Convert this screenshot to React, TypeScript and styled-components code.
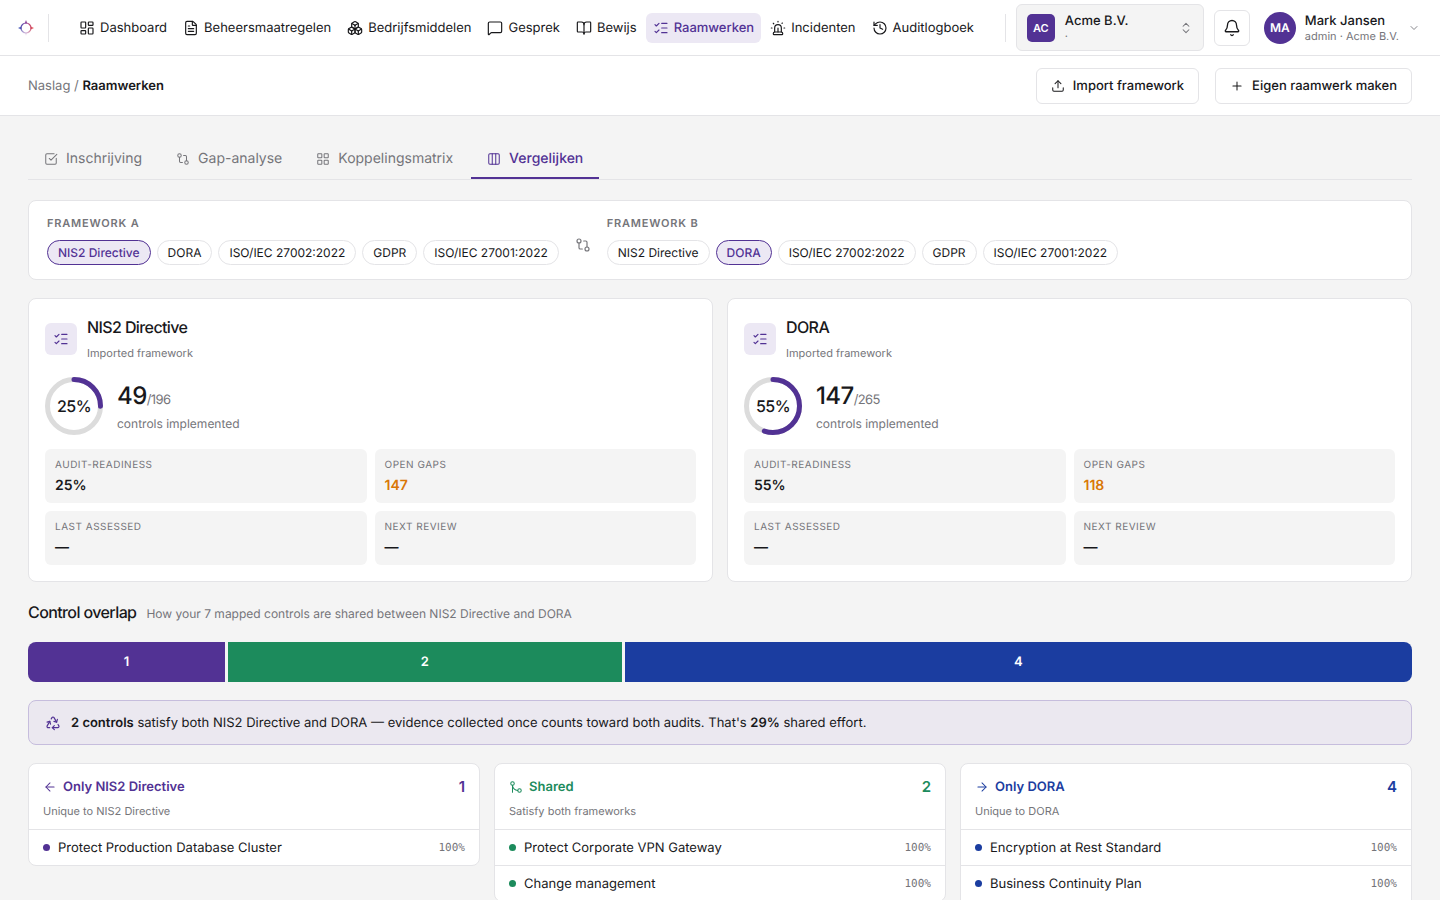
import React from "react";
import styled, { createGlobalStyle, css } from "styled-components";
import {
  ArrowLeft,
  ArrowRight,
  Bell,
  BookOpen,
  Boxes,
  ChevronDown,
  ChevronsUpDown,
  Columns3,
  FileText,
  GitCompare,
  GitMerge,
  History,
  LayoutDashboard,
  LayoutGrid,
  ListChecks,
  MessageSquare,
  Plus,
  Recycle,
  Siren,
  SquareCheckBig,
  Upload,
} from "lucide-react";
import type { LucideIcon } from "lucide-react";

const color = {
  ink: "#18181b",
  muted: "#75757a",
  line: "#e4e4e7",
  page: "#f4f4f4",
  card: "#ffffff",
  purple: "#523294",
  tint: "#ece8f4",
  green: "#1c8b5c",
  blue: "#1b3da0",
  amber: "#d97706",
};

const GlobalStyle = createGlobalStyle`
  *, *::before, *::after { box-sizing: border-box; }
  body {
    margin: 0;
    background: ${color.page};
    color: ${color.ink};
    font-family: Inter, "Liberation Sans", sans-serif;
    font-size: 13px;
    line-height: 20px;
    text-rendering: geometricPrecision;
  }
  button { font: inherit; color: inherit; cursor: pointer; margin: 0; text-rendering: inherit; }
  h2, p, ul { margin: 0; padding: 0; }
  ul { list-style: none; }
  svg { flex: none; }
  .lucide { stroke-width: 1.75; }
`;

const TopBar = styled.header`
  display: flex;
  align-items: center;
  height: 56px;
  padding: 0 20px 0 14px;
  background: ${color.card};
  border-bottom: 1px solid ${color.line};
`;

const Logo = styled.a`
  display: flex;
  padding: 2px;
  margin-right: 10px;
`;

const Rule = styled.span`
  flex: none;
  width: 1px;
  height: 28px;
  background: ${color.line};
`;

const Nav = styled.nav`
  display: flex;
  flex: 1;
  gap: 2px;
  margin-left: 23px;
`;

const NavLink = styled.a<{ $active?: boolean }>`
  display: flex;
  align-items: center;
  gap: 5px;
  height: 30px;
  padding: 0 7px;
  border-radius: 6px;
  text-decoration: none;
  white-space: nowrap;
  color: ${(p) => (p.$active ? color.purple : color.ink)};
  background: ${(p) => (p.$active ? color.tint : "transparent")};
  font-weight: ${(p) => (p.$active ? 500 : 400)};
`;

const OrgSwitcher = styled.button`
  display: flex;
  align-items: center;
  gap: 10px;
  width: 188px;
  height: 47px;
  margin: 0 10px;
  padding: 0 10px;
  border: 1px solid ${color.line};
  border-radius: 6px;
  background: ${color.page};
  text-align: left;
`;

const Initials = styled.span<{ $round?: boolean }>`
  display: flex;
  flex: none;
  align-items: center;
  justify-content: center;
  width: ${(p) => (p.$round ? 32 : 28)}px;
  height: ${(p) => (p.$round ? 32 : 28)}px;
  border-radius: ${(p) => (p.$round ? "50%" : "5px")};
  background: ${color.purple};
  color: #fff;
  font-size: ${(p) => (p.$round ? 12 : 11)}px;
  font-weight: 600;
`;

const Identity = styled.span`
  display: flex;
  flex: 1;
  flex-direction: column;
  white-space: nowrap;
`;

const IdentityName = styled.span`
  font-weight: 500;
  line-height: 16px;
`;

const IdentityNote = styled.span`
  color: ${color.muted};
  font-size: 11px;
  line-height: 14px;
`;

const BellButton = styled.button`
  display: flex;
  align-items: center;
  justify-content: center;
  width: 36px;
  height: 36px;
  padding: 0;
  border: 1px solid ${color.line};
  border-radius: 6px;
  background: ${color.card};
`;

const UserButton = styled.button`
  display: flex;
  align-items: center;
  gap: 9px;
  margin-left: 14px;
  padding: 0;
  border: 0;
  background: none;
  text-align: left;

  > svg { color: ${color.muted}; }
`;

const SubBar = styled.div`
  display: flex;
  align-items: center;
  justify-content: space-between;
  height: 60px;
  padding: 0 28px;
  background: ${color.card};
  border-bottom: 1px solid ${color.line};
`;

const Crumbs = styled.nav`
  color: ${color.muted};

  a { color: inherit; text-decoration: none; }
  strong { color: ${color.ink}; font-weight: 600; }
`;

const Actions = styled.div`
  display: flex;
  gap: 16px;
`;

const ActionButton = styled.button`
  display: flex;
  align-items: center;
  gap: 8px;
  height: 36px;
  padding: 0 14px;
  border: 1px solid ${color.line};
  border-radius: 6px;
  background: ${color.card};
  font-weight: 500;
`;

const Main = styled.main`
  display: flex;
  flex-direction: column;
  gap: 18px;
  padding: 24px 28px;
`;

const Tabs = styled.div`
  display: flex;
  gap: 2px;
  margin-bottom: 2px;
  border-bottom: 1px solid ${color.line};
`;

const Tab = styled.button<{ $active?: boolean }>`
  display: flex;
  align-items: center;
  gap: 8px;
  height: 39px;
  padding: 1px 16px 0;
  border: 0;
  border-bottom: 2px solid ${(p) => (p.$active ? color.purple : "transparent")};
  background: none;
  color: ${(p) => (p.$active ? color.purple : color.muted)};
  font-size: 14px;
  font-weight: ${(p) => (p.$active ? 500 : 400)};
`;

const card = css`
  background: ${color.card};
  border: 1px solid ${color.line};
  border-radius: 8px;
`;

const Picker = styled.section`
  ${card}
  display: flex;
  align-items: center;
  gap: 16px;
  padding: 14px 18px;

  > svg { color: ${color.muted}; margin-top: 10px; }
`;

const PickerLabel = styled.div`
  margin-bottom: 9px;
  color: ${color.muted};
  font-size: 11px;
  font-weight: 600;
  line-height: 16px;
  letter-spacing: 0.8px;
  text-transform: uppercase;
`;

const Chips = styled.div`
  display: flex;
  gap: 6px;
`;

const Chip = styled.button<{ $on: boolean }>`
  height: 25px;
  padding: 0 10px;
  border: 1px solid ${(p) => (p.$on ? color.purple : color.line)};
  border-radius: 13px;
  background: ${(p) => (p.$on ? color.tint : color.card)};
  color: ${(p) => (p.$on ? color.purple : color.ink)};
  font-size: 12px;
  font-weight: ${(p) => (p.$on ? 500 : 400)};
  white-space: nowrap;
`;

const Columns = styled.div<{ $count: number }>`
  display: grid;
  grid-template-columns: repeat(${(p) => p.$count}, minmax(0, 1fr));
  gap: 14px;
  align-items: start;
`;

const Framework = styled.section`
  ${card}
  display: flex;
  flex-direction: column;
  gap: 14px;
  padding: 16px;
`;

const FrameworkHead = styled.div`
  display: flex;
  align-items: center;
  gap: 10px;
`;

const IconTile = styled.span`
  display: flex;
  align-items: center;
  justify-content: center;
  width: 32px;
  height: 32px;
  border-radius: 6px;
  background: ${color.tint};
  color: ${color.purple};
`;

const Title = styled.h2`
  font-size: 16px;
  font-weight: 500;
  line-height: 24px;
  letter-spacing: -0.6px;
`;

const Note = styled.p<{ $size?: number }>`
  color: ${color.muted};
  font-size: ${(p) => p.$size ?? 11}px;
`;

const FrameworkNote = styled(Note)`
  margin-top: 4px;
`;

const Progress = styled.div`
  display: flex;
  align-items: center;
  gap: 14px;
`;

const RingBox = styled.div`
  display: grid;
  place-items: center;
  width: 58px;
  height: 58px;

  > * { grid-area: 1 / 1; }
`;

const RingText = styled.span`
  font-size: 16px;
  font-weight: 500;
  letter-spacing: -0.6px;
`;

const Score = styled.p`
  margin-top: 2px;
  color: ${color.muted};
  line-height: 30px;
  letter-spacing: -0.6px;

  strong { color: ${color.ink}; font-size: 24px; font-weight: 500; }
`;

const ScoreNote = styled(Note)`
  line-height: 18px;
`;

const Stats = styled.dl`
  display: grid;
  grid-template-columns: 1fr 1fr;
  gap: 8px;
  margin: 0;
`;

const Stat = styled.div`
  height: 54px;
  padding: 9px 10px 0;
  border-radius: 6px;
  background: ${color.page};

  dt {
    color: ${color.muted};
    font-size: 10px;
    line-height: 15px;
    letter-spacing: 0.5px;
    text-transform: uppercase;
  }
`;

const StatValue = styled.dd<{ $warn?: boolean }>`
  margin: 2px 0 0;
  color: ${(p) => (p.$warn ? color.amber : color.ink)};
  font-size: 14px;
  font-weight: 600;
  line-height: 22px;
`;

const OverlapHead = styled.div`
  display: flex;
  align-items: baseline;
  gap: 10px;
`;

const Bar = styled.div`
  display: flex;
  gap: 3px;
  height: 40px;
  border-radius: 8px;
  overflow: hidden;
`;

const Segment = styled.div<{ $share: number; $tone: string }>`
  display: flex;
  flex: ${(p) => p.$share} 1 0;
  align-items: center;
  justify-content: center;
  background: ${(p) => p.$tone};
  color: #fff;
  font-size: 13px;
  font-weight: 600;
`;

const Callout = styled.p`
  display: flex;
  align-items: center;
  gap: 10px;
  height: 45px;
  padding: 0 16px;
  border: 1px solid #c6bddd;
  border-radius: 8px;
  background: #ebe8f0;

  > svg { color: ${color.purple}; }
  strong { font-weight: 600; }
`;

const ControlCard = styled.section`
  ${card}
  overflow: hidden;
`;

const ControlHead = styled.div`
  padding: 12px 14px 8px;
`;

const ControlTitle = styled.h2<{ $tone: string }>`
  display: flex;
  align-items: center;
  gap: 6px;
  color: ${(p) => p.$tone};
  font-size: 13px;
  font-weight: 600;
  line-height: 22px;

  span:last-child { margin-left: auto; font-size: 15px; }
`;

const ControlNote = styled(Note)`
  margin-top: 3px;
`;

/* Keeps room for one 36px row per counted control. */
const ControlList = styled.ul<{ $rows: number }>`
  min-height: ${(p) => p.$rows * 36}px;
`;

const ControlRow = styled.li`
  display: flex;
  align-items: center;
  gap: 8px;
  height: 36px;
  padding: 0 14px;
  border-top: 1px solid ${color.line};
`;

const Dot = styled.span<{ $tone: string }>`
  width: 7px;
  height: 7px;
  border-radius: 50%;
  background: ${(p) => p.$tone};
`;

const Match = styled.span`
  margin-left: auto;
  color: ${color.muted};
  font-family: "DejaVu Sans Mono", "Liberation Mono", monospace;
  font-size: 11px;
`;

const navItems: { label: string; icon: LucideIcon; active?: boolean }[] = [
  { label: "Dashboard", icon: LayoutDashboard },
  { label: "Beheersmaatregelen", icon: FileText },
  { label: "Bedrijfsmiddelen", icon: Boxes },
  { label: "Gesprek", icon: MessageSquare },
  { label: "Bewijs", icon: BookOpen },
  { label: "Raamwerken", icon: ListChecks, active: true },
  { label: "Incidenten", icon: Siren },
  { label: "Auditlogboek", icon: History },
];

const tabs: { label: string; icon: LucideIcon; active?: boolean }[] = [
  { label: "Inschrijving", icon: SquareCheckBig },
  { label: "Gap-analyse", icon: GitCompare },
  { label: "Koppelingsmatrix", icon: LayoutGrid },
  { label: "Vergelijken", icon: Columns3, active: true },
];

const frameworks = ["NIS2 Directive", "DORA", "ISO/IEC 27002:2022", "GDPR", "ISO/IEC 27001:2022"];

const compared = [
  { name: "NIS2 Directive", percent: 25, done: 49, total: 196, gaps: 147 },
  { name: "DORA", percent: 55, done: 147, total: 265, gaps: 118 },
];

const overlap = [
  {
    title: "Only NIS2 Directive",
    note: "Unique to NIS2 Directive",
    icon: ArrowLeft,
    tone: color.purple,
    count: 1,
    controls: ["Protect Production Database Cluster"],
  },
  {
    title: "Shared",
    note: "Satisfy both frameworks",
    icon: GitMerge,
    tone: color.green,
    count: 2,
    controls: ["Protect Corporate VPN Gateway", "Change management"],
  },
  {
    title: "Only DORA",
    note: "Unique to DORA",
    icon: ArrowRight,
    tone: color.blue,
    count: 4,
    controls: ["Encryption at Rest Standard", "Business Continuity Plan"],
  },
];

function LogoMark() {
  return (
    <svg width="20" height="20" viewBox="0 0 20 20" fill="none" aria-hidden="true">
      <defs>
        <linearGradient id="mark" x1="3" y1="10" x2="17" y2="10" gradientUnits="userSpaceOnUse">
          <stop offset="0" stopColor="#3f57b8" />
          <stop offset="0.5" stopColor="#8f4aa0" />
          <stop offset="1" stopColor="#e8504f" />
        </linearGradient>
        <linearGradient id="fade" x1="10" y1="4" x2="10" y2="17" gradientUnits="userSpaceOnUse">
          <stop offset="0.5" stopColor="#fff" />
          <stop offset="1" stopColor="#fff" stopOpacity="0.15" />
        </linearGradient>
        <mask id="fadeMask">
          <rect width="20" height="20" fill="url(#fade)" />
        </mask>
      </defs>
      <g mask="url(#fadeMask)">
        <circle cx="10" cy="10" r="5" stroke="url(#mark)" strokeWidth="1.2" />
        <path
          d="M10 2l1.4 3.400H8.600zM18 10l-3.400 1.400V8.600zM2 10l3.400-1.400v2.800zM10 18l-.8-3h1.600z"
          fill="url(#mark)"
        />
      </g>
    </svg>
  );
}

function Ring({ percent }: { percent: number }) {
  const radius = 26.5;
  const around = 2 * Math.PI * radius;
  return (
    <RingBox>
      <svg width="58" height="58" viewBox="0 0 58 58" fill="none" strokeWidth="5" aria-hidden="true">
        <circle cx="29" cy="29" r={radius} stroke="#dcdcdc" />
        <circle
          cx="29"
          cy="29"
          r={radius}
          stroke={color.purple}
          strokeLinecap="round"
          strokeDasharray={`${(around * percent) / 100} ${around}`}
          transform="rotate(-90 29 29)"
        />
      </svg>
      <RingText>{percent}%</RingText>
    </RingBox>
  );
}

function FrameworkPicker({ label, selected }: { label: string; selected: string }) {
  return (
    <div role="group" aria-label={label}>
      <PickerLabel>{label}</PickerLabel>
      <Chips>
        {frameworks.map((name) => (
          <Chip key={name} $on={name === selected} aria-pressed={name === selected}>
            {name}
          </Chip>
        ))}
      </Chips>
    </div>
  );
}

export default function App() {
  return (
    <>
      <GlobalStyle />
      <TopBar>
        <Logo href="#" aria-label="Home">
          <LogoMark />
        </Logo>
        <Rule />
        <Nav>
          {navItems.map(({ label, icon: Icon, active }) => (
            <NavLink key={label} href="#" $active={active}>
              <Icon size={16} />
              {label}
            </NavLink>
          ))}
        </Nav>
        <Rule />
        <OrgSwitcher>
          <Initials>AC</Initials>
          <Identity>
            <IdentityName>Acme B.V.</IdentityName>
            <IdentityNote>·</IdentityNote>
          </Identity>
          <ChevronsUpDown size={14} color={color.muted} />
        </OrgSwitcher>
        <BellButton aria-label="Meldingen">
          <Bell size={18} />
        </BellButton>
        <UserButton>
          <Initials $round>MA</Initials>
          <Identity>
            <IdentityName>Mark Jansen</IdentityName>
            <IdentityNote>admin · Acme B.V.</IdentityNote>
          </Identity>
          <ChevronDown size={12} />
        </UserButton>
      </TopBar>
      <SubBar>
        <Crumbs>
          <a href="#">Naslag</a> / <strong>Raamwerken</strong>
        </Crumbs>
        <Actions>
          <ActionButton>
            <Upload size={14} />
            Import framework
          </ActionButton>
          <ActionButton>
            <Plus size={14} />
            Eigen raamwerk maken
          </ActionButton>
        </Actions>
      </SubBar>
      <Main>
        <Tabs role="tablist">
          {tabs.map(({ label, icon: Icon, active }) => (
            <Tab key={label} role="tab" aria-selected={!!active} $active={active}>
              <Icon size={14} />
              {label}
            </Tab>
          ))}
        </Tabs>
        <Picker>
          <FrameworkPicker label="Framework A" selected="NIS2 Directive" />
          <GitCompare size={16} />
          <FrameworkPicker label="Framework B" selected="DORA" />
        </Picker>
        <Columns $count={2}>
          {compared.map((f) => (
            <Framework key={f.name}>
              <FrameworkHead>
                <IconTile>
                  <ListChecks size={16} />
                </IconTile>
                <div>
                  <Title>{f.name}</Title>
                  <FrameworkNote>Imported framework</FrameworkNote>
                </div>
              </FrameworkHead>
              <Progress>
                <Ring percent={f.percent} />
                <div>
                  <Score>
                    <strong>{f.done}</strong>/{f.total}
                  </Score>
                  <ScoreNote $size={12}>controls implemented</ScoreNote>
                </div>
              </Progress>
              <Stats>
                <Stat>
                  <dt>Audit-readiness</dt>
                  <StatValue>{f.percent}%</StatValue>
                </Stat>
                <Stat>
                  <dt>Open gaps</dt>
                  <StatValue $warn>{f.gaps}</StatValue>
                </Stat>
                <Stat>
                  <dt>Last assessed</dt>
                  <StatValue>—</StatValue>
                </Stat>
                <Stat>
                  <dt>Next review</dt>
                  <StatValue>—</StatValue>
                </Stat>
              </Stats>
            </Framework>
          ))}
        </Columns>
        <OverlapHead>
          <Title>Control overlap</Title>
          <Note $size={12}>How your 7 mapped controls are shared between NIS2 Directive and DORA</Note>
        </OverlapHead>
        <Bar>
          {overlap.map((group) => (
            <Segment key={group.title} $share={group.count} $tone={group.tone}>
              {group.count}
            </Segment>
          ))}
        </Bar>
        <Callout>
          <Recycle size={16} />
          <span>
            <strong>2 controls</strong> satisfy both NIS2 Directive and DORA — evidence collected once
            counts toward both audits. That's <strong>29%</strong> shared effort.
          </span>
        </Callout>
        <Columns $count={3}>
          {overlap.map(({ title, note, icon: Icon, tone, count, controls }) => (
            <ControlCard key={title}>
              <ControlHead>
                <ControlTitle $tone={tone}>
                  <Icon size={14} />
                  <span>{title}</span>
                  <span>{count}</span>
                </ControlTitle>
                <ControlNote>{note}</ControlNote>
              </ControlHead>
              <ControlList $rows={count}>
                {controls.map((name) => (
                  <ControlRow key={name}>
                    <Dot $tone={tone} />
                    {name}
                    <Match>100%</Match>
                  </ControlRow>
                ))}
              </ControlList>
            </ControlCard>
          ))}
        </Columns>
      </Main>
    </>
  );
}
